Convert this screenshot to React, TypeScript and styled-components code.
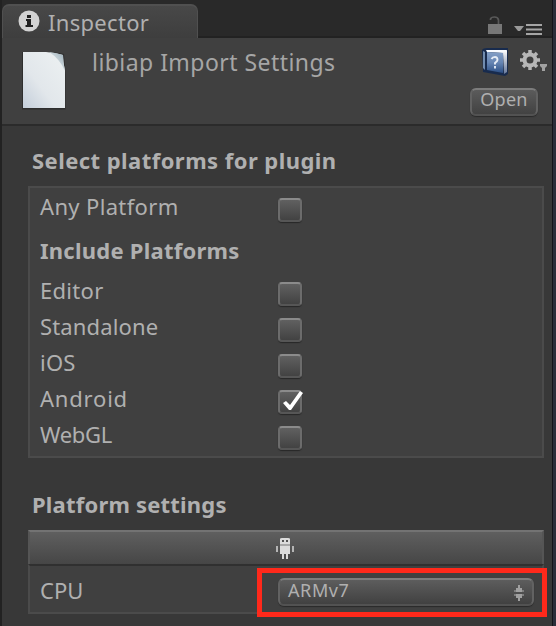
import React from "react";
import styled, { createGlobalStyle } from "styled-components";

const GlobalStyle = createGlobalStyle`
  * { box-sizing: border-box; }
  html, body { margin: 0; padding: 0; background: #222; }
  body { font-family: "Noto Sans", "Open Sans", sans-serif; color: #b3b3b3; overflow: hidden; }
  svg { display: block; flex: none; }
`;

const Frame = styled.div`
  width: 556px;
  height: 626px;
  display: flex;
  border-left: 2px solid #222;
  background: #2b2e3a;
`;

const Inspector = styled.main`
  width: 550px;
  height: 626px;
  display: flex;
  flex-direction: column;
  background: #383838;
`;

const Edge = styled.div`
  width: 1px;
  background: #14141a;
`;

const Text = styled.span<{ $size?: number; $spacing?: number; $bold?: boolean; $color?: string }>`
  font-size: ${(p) => p.$size ?? 22}px;
  font-weight: ${(p) => (p.$bold ? 700 : 400)};
  letter-spacing: ${(p) => p.$spacing ?? 0}px;
  color: ${(p) => p.$color ?? "#b0b0b0"};
  line-height: 30px;
  white-space: nowrap;
`;

const TabBar = styled.div`
  height: 38px;
  display: flex;
  justify-content: space-between;
  padding-top: 4px;
  background: #292929;
  box-shadow: inset 0 -2px #222;
`;

const Tab = styled.div`
  width: 196px;
  height: 34px;
  display: flex;
  align-items: flex-start;
  gap: 8px;
  padding: 2px 0 0 15px;
  border: solid #505050;
  border-width: 2px 1px 0;
  border-radius: 7px 7px 0 0;
  background: linear-gradient(#484848, #3e3e3e);

  svg { margin-top: 2px; }
  span { margin-top: -1px; }
`;

const TabTools = styled.div`
  display: flex;
  align-items: flex-start;
  gap: 11px;
  padding: 11px 10px 0 0;
`;

const Header = styled.header`
  height: 86px;
  display: flex;
  align-items: flex-start;
  padding: 12px 5px 0 19px;
  background: #404040;
`;

const Title = styled.h1`
  flex: 1;
  margin: -3px 0 0 25px;
  display: flex;
`;

const HeaderTools = styled.div`
  display: flex;
  flex-direction: column;
  align-items: flex-end;
  gap: 12px;
  margin-top: -2px;
`;

const IconRow = styled.div`
  display: flex;
  gap: 12px;
`;

const OpenButton = styled.button`
  width: 68px;
  height: 28px;
  margin-right: 9px;
  padding: 0 0 4px;
  display: flex;
  align-items: center;
  justify-content: center;
  font-family: inherit;
  border: 2px solid #626262;
  border-top-color: #7c7c7c;
  border-bottom-color: #525252;
  border-radius: 6px;
  background: linear-gradient(#5b5b5b, #424242);
  box-shadow: 0 1px 1px #2a2a2a;

  span { margin-top: -2px; }
`;

const Divider = styled.div`
  height: 2px;
  background: #2b2b2b;
`;

const Body = styled.div`
  flex: 1;
  padding: 19px 8px 0 26px;
`;

const SectionTitle = styled.h2`
  height: 30px;
  margin: 0 0 11px 4px;
  display: flex;
`;

const Panel = styled.section`
  height: 272px;
  padding: 0 10px;
  border: 2px solid #4b4b4b;
  background: #404040;
`;

const Row = styled.label`
  height: 36px;
  display: grid;
  grid-template-columns: 238px 24px;
  align-items: center;
`;

const SubHeading = styled.div`
  height: 48px;
  padding-top: 4px;
  display: flex;
  align-items: center;
`;

const Box = styled.span`
  width: 24px;
  height: 24px;
  margin-top: 8px;
  border: 2px solid #6c6c6c;
  border-top-color: #8b8b8b;
  border-bottom-color: #565656;
  border-radius: 4px;
  background: linear-gradient(#606060, #424242);
  box-shadow: 0 1px 1px #272727;

  svg { margin: -2px; overflow: visible; }
`;

const Settings = styled.div`
  margin-top: 31px;
`;

const PlatformTab = styled.div`
  height: 34px;
  display: flex;
  justify-content: center;
  padding: 6px 2px 0 0;
  border-top: 2px solid #737373;
  border-left: 2px solid #555;
  border-right: 2px solid #555;
  background: linear-gradient(#5f5f5f, #464646);
`;

const PlatformBody = styled.div`
  height: 50px;
  display: flex;
  padding-left: 10px;
  border: 2px solid #4b4b4b;
  border-top-color: #303030;
  background: #404040;
`;

const CpuLabel = styled.div`
  flex: none;
  width: 217px;
  padding-top: 9px;
`;

const Highlight = styled.div`
  flex: none;
  width: 290px;
  height: 49px;
  margin: 2px -5px 0 0;
  padding: 5px 8px 5px 16px;
  border: 5px solid #ff291b;
`;

const Select = styled.div`
  width: 256px;
  height: 28px;
  display: flex;
  align-items: center;
  justify-content: space-between;
  padding: 0 8px 0 8px;
  border: 2px solid #626262;
  border-top-color: #7c7c7c;
  border-bottom-color: #525252;
  border-radius: 6px;
  background: linear-gradient(#5d5d5d, #414141);
  box-shadow: 0 1px 1px #2a2a2a;

  span { margin-top: -4px; }
  svg { margin-top: 1px; }
`;

const InfoIcon = () => (
  <svg width="22" height="22" viewBox="0 0 22 22">
    <circle cx="11" cy="11" r="10.5" fill="#d2d2d2" />
    <path d="M9 5h4v3H9zM8 9h5v6h2v2H7.500v-2H9v-4H8z" fill="#202020" />
  </svg>
);

const LockIcon = () => (
  <svg width="16" height="20" viewBox="0 0 16 20">
    <path d="M3.500 5V4Q4 2 7.500 2T11.500 5V9" fill="none" stroke="#595959" strokeWidth="1.700" />
    <path d="M1 9h14v10H1z" fill="#777" />
  </svg>
);

const MenuIcon = () => (
  <svg width="28" height="20" viewBox="0 0 28 20">
    <path d="M0 11h10L6 16H4z" fill="#999" />
    <path d="M12 9h16v2H12zM12 13.500h16v2H12zM12 18h16v2H12z" fill="#a5a5a5" />
  </svg>
);

const FileIcon = () => (
  <svg width="46" height="60" viewBox="0 0 46 60">
    <defs>
      <linearGradient id="sheet" x1="1" y1="0" x2="0" y2="1">
        <stop offset="0" stopColor="#edf1f2" />
        <stop offset=".6" stopColor="#e2e7eb" />
        <stop offset="1" stopColor="#c4ceda" />
      </linearGradient>
      <linearGradient id="curl" x1="1" y1="0" x2="0" y2="1">
        <stop offset="0" stopColor="#94a8b3" />
        <stop offset=".55" stopColor="#c8d4da" stopOpacity=".8" />
        <stop offset="1" stopColor="#edf1f2" stopOpacity="0" />
      </linearGradient>
    </defs>
    <path d="M1 2H25Q36 2 43 4Q44 14 44.500 24V59.500H1z" fill="#272727" opacity=".7" />
    <path d="M2 2H25Q34 2.500 42 5Q42 11 44 20V58H2z" fill="url(#sheet)" />
    <path d="M28 2Q36 3 42 5Q42 12 44 21Q39 9 28 2z" fill="url(#curl)" />
  </svg>
);

const HelpIcon = () => (
  <svg width="26" height="28" viewBox="0 0 26 28">
    <defs>
      <linearGradient id="cover" x1="0" y1="0" x2="0" y2="1">
        <stop offset="0" stopColor="#839fc6" />
        <stop offset=".5" stopColor="#6685b3" />
        <stop offset="1" stopColor="#2c4f85" />
      </linearGradient>
      <linearGradient id="pages" x1="0" y1="0" x2="0" y2="1">
        <stop offset="0" stopColor="#fff" />
        <stop offset="1" stopColor="#66789b" />
      </linearGradient>
    </defs>
    <path d="M0 2Q1 0 5 0H26V26L23 28L1 24z" fill="#182b4d" />
    <path d="M4 2H25L22 5L5 4z" fill="#f7faff" />
    <path d="M21 4L25 2V24L22 26z" fill="url(#pages)" />
    <path d="M5 4L21 5V25L5 22z" fill="url(#cover)" />
    <path d="M1 3L3 4V22L1 20z" fill="#718caf" />
    <path d="M9.500 11Q10.500 9 13 9Q15.500 9 15.500 12Q15.500 13 13 15V16.500M13 18v2.500" fill="none" stroke="#e4ebf5" strokeWidth="1.900" />
  </svg>
);

const GearIcon = () => (
  <svg width="27" height="26" viewBox="0 0 27 26">
    <circle cx="10" cy="12" r="5.500" fill="none" stroke="#b7b7b7" strokeWidth="4" />
    <g stroke="#b7b7b7" strokeWidth="3.500">
      <path d="M10 2v4M10 18v4M0 12h4M16 12h4M3 5l3 3M14 16l3 3M3 19l3-3M14 8l3-3" />
    </g>
    <path d="M20 16h7v2l-2 2v3h-3v-3l-2-2z" fill="#a2a2a2" />
  </svg>
);

const CheckMark = () => (
  <svg width="24" height="24" viewBox="0 0 24 24">
    <path d="M5 13L8 11L12 15L22 1L25 3L13 20L11 20z" fill="#fff" />
  </svg>
);

const AndroidIcon = () => (
  <svg width="18" height="22" viewBox="0 0 18 22">
    <path d="M4 2V1Q4 0 6 0h6q2 0 2 1v5H4zM4 8h10v8H4zM6 16h2v5H6zM10 16h2v5h-2z" fill="#dcdcdc" />
    <path d="M4 6h10v2H4z" fill="#a8a8a8" />
    <path d="M6 2h2v2H6zM10 2h2v2h-2z" fill="#535353" />
    <path d="M0 8h2v6H0zM16 8h2v6h-2z" fill="#b5b5b5" />
  </svg>
);

const StepperIcon = () => (
  <svg width="10" height="16" viewBox="0 0 10 16">
    <path d="M2 7V3h2V0h2v3h2v4zM2 9h6v4H6v3H4v-3H2z" fill="#a0a0a0" />
    <path d="M0 5h2v2H0zM8 5h2v2H8zM0 9h2v2H0zM8 9h2v2H8z" fill="#7d7d7d" />
  </svg>
);

const platforms = [
  { name: "Editor", spacing: 0.3 },
  { name: "Standalone", spacing: 0.15 },
  { name: "iOS", spacing: 0.2 },
  { name: "Android", spacing: 0.8, checked: true },
  { name: "WebGL", spacing: -0.3 },
];

export default function App() {
  return (
    <>
      <GlobalStyle />
      <Frame>
        <Inspector>
          <TabBar>
            <Tab>
              <InfoIcon />
              <Text $spacing={0.3}>Inspector</Text>
            </Tab>
            <TabTools>
              <LockIcon />
              <MenuIcon />
            </TabTools>
          </TabBar>
          <Header>
            <FileIcon />
            <Title><Text $size={23} $spacing={0.45} $color="#a6a6a6">libiap Import Settings</Text></Title>
            <HeaderTools>
              <IconRow>
                <HelpIcon />
                <GearIcon />
              </IconRow>
              <OpenButton><Text $size={18} $spacing={0.3}>Open</Text></OpenButton>
            </HeaderTools>
          </Header>
          <Divider />
          <Body>
            <SectionTitle><Text $bold $spacing={0.45}>Select platforms for plugin</Text></SectionTitle>
            <Panel>
              <Row><Text $spacing={0.35}>Any Platform</Text><Box /></Row>
              <SubHeading><Text $bold $spacing={0.25}>Include Platforms</Text></SubHeading>
              {platforms.map((p) => (
                <Row key={p.name}>
                  <Text $spacing={p.spacing}>{p.name}</Text>
                  <Box>{p.checked && <CheckMark />}</Box>
                </Row>
              ))}
            </Panel>
            <Settings>
              <SectionTitle><Text $bold $spacing={0.2}>Platform settings</Text></SectionTitle>
              <PlatformTab><AndroidIcon /></PlatformTab>
              <PlatformBody>
                <CpuLabel><Text>CPU</Text></CpuLabel>
                <Highlight>
                  <Select><Text $size={18} $spacing={0.6}>ARMv7</Text><StepperIcon /></Select>
                </Highlight>
              </PlatformBody>
            </Settings>
          </Body>
        </Inspector>
        <Edge />
      </Frame>
    </>
  );
}
